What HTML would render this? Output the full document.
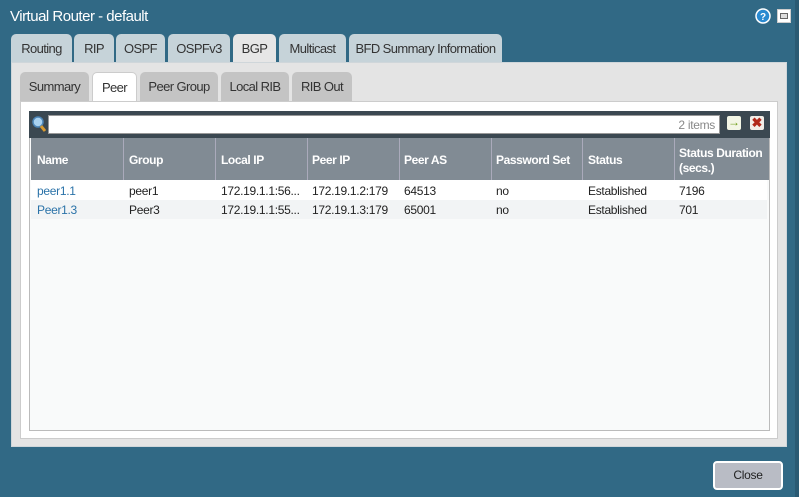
<!DOCTYPE html>
<html><head><style>
*{margin:0;padding:0;box-sizing:border-box}
body{width:799px;height:497px;background:#316985;font-family:"Liberation Sans",sans-serif;position:relative;overflow:hidden;font-size:12px}
.abs{position:absolute}
.title{left:10px;top:8px;color:#fff;font-size:15px;letter-spacing:-0.5px}
.tab{position:absolute;top:34px;height:28px;background:#c6d3d9;border-radius:5px 5px 0 0;color:#333;font-size:13px;text-align:center;line-height:29px;letter-spacing:-0.6px}
.tab.act{background:#e6e6e6}
.outer{left:11px;top:62px;width:776px;height:385px;background:#e4e4e4;border:1px solid #cfd6da}
.stab{position:absolute;top:72px;height:29px;background:#c4c4c4;border-radius:5px 5px 0 0;color:#333;font-size:13px;text-align:center;line-height:30px;letter-spacing:-0.6px}
.stab.act{background:#fff;border:1px solid #ccc;border-bottom:none}
.inner{left:20px;top:101px;width:758px;height:338px;background:#fff;border:1px solid #ccc}
.grid{left:29px;top:111px;width:741px;height:320px;background:#f9fafa;border:1px solid #bbb}
.tool{left:29px;top:111px;width:741px;height:27px;background:#3b4851}
.search{left:48px;top:115px;width:672px;height:19px;background:#fff;border:1px solid #999;text-align:right;color:#888;font-size:12px;line-height:18px;padding-right:4px;letter-spacing:-0.3px}
.hdr{left:31px;top:138px;width:738px;height:42px;background:#818b94}
.col{position:absolute;color:#fff;font-weight:bold;font-size:12px;letter-spacing:-0.4px}
.cell{position:absolute;color:#222;font-size:12px;letter-spacing:-0.3px}
.vl{position:absolute;width:1px;background:#c8c8c8}
.close{left:713px;top:461px;width:70px;height:29px;background:#b9bcc5;border:2px solid #fff;border-radius:4px;text-align:center;line-height:25px;font-size:12px;color:#222;letter-spacing:-0.3px}
</style></head><body>
<div class="abs title">Virtual Router - default</div>
<svg class="abs" style="left:755px;top:8px" width="16" height="16"><circle cx="8" cy="8" r="7" fill="#2a8ad0" stroke="#fff" stroke-width="1.5"/><text x="8" y="12" font-size="10" font-weight="bold" fill="#fff" text-anchor="middle" font-family="Liberation Sans">?</text></svg>
<div class="abs" style="left:777px;top:9px;width:14px;height:14px;background:#fff;border:1px solid #ccc"><div style="margin:3px 2px;height:6px;border:1px solid #666;background:#ddd"></div></div>
<div class="abs" style="left:795px;top:0;width:4px;height:497px;background:#2a5a73"></div>

<div class="tab" style="left:11px;width:61px">Routing</div>
<div class="tab" style="left:74px;width:40px">RIP</div>
<div class="tab" style="left:116px;width:49px">OSPF</div>
<div class="tab" style="left:168px;width:62px">OSPFv3</div>
<div class="tab act" style="left:233px;width:43px">BGP</div>
<div class="tab" style="left:279px;width:67px">Multicast</div>
<div class="tab" style="left:349px;width:153px">BFD Summary Information</div>

<div class="abs outer"></div>
<div class="stab" style="left:20px;width:69px">Summary</div>
<div class="stab act" style="left:92px;width:45px">Peer</div>
<div class="stab" style="left:140px;width:78px">Peer Group</div>
<div class="stab" style="left:221px;width:68px">Local RIB</div>
<div class="stab" style="left:292px;width:60px">RIB Out</div>
<div class="abs inner"></div>
<div class="abs grid"></div>
<div class="abs tool"></div>
<svg class="abs" style="left:31px;top:115px" width="16" height="18"><circle cx="7" cy="7" r="5" fill="#a9d2f0" stroke="#4d86b8" stroke-width="1.5"/><line x1="10" y1="11" x2="14" y2="16" stroke="#d89a30" stroke-width="3"/></svg>
<div class="abs search">2 items</div>
<div class="abs" style="left:727px;top:116px;width:14px;height:14px;background:#f3f6e6;border-radius:2px;color:#6a9a10;font-size:12px;line-height:13px;text-align:center;font-weight:bold">→</div>
<div class="abs" style="left:750px;top:116px;width:14px;height:14px;background:#f3eee8;border-radius:2px;color:#b2281a;font-size:13px;line-height:14px;text-align:center;font-weight:bold">✖</div>

<div class="abs hdr"></div>
<div class="vl" style="left:123px;top:138px;height:81px;background:#aab"></div>
<div class="vl" style="left:215px;top:138px;height:81px;background:#aab"></div>
<div class="vl" style="left:307px;top:138px;height:81px;background:#aab"></div>
<div class="vl" style="left:399px;top:138px;height:81px;background:#aab"></div>
<div class="vl" style="left:491px;top:138px;height:81px;background:#aab"></div>
<div class="vl" style="left:582px;top:138px;height:81px;background:#aab"></div>
<div class="vl" style="left:674px;top:138px;height:81px;background:#aab"></div>
<div class="vl" style="left:766px;top:180px;height:39px"></div>
<div class="abs" style="left:31px;top:180px;width:736px;height:20px;background:#fff"></div>
<div class="abs" style="left:31px;top:200px;width:736px;height:19px;background:#f2f4f5"></div>

<div class="col" style="left:37px;top:153px">Name</div>
<div class="col" style="left:129px;top:153px">Group</div>
<div class="col" style="left:221px;top:153px">Local IP</div>
<div class="col" style="left:312px;top:153px">Peer IP</div>
<div class="col" style="left:404px;top:153px">Peer AS</div>
<div class="col" style="left:496px;top:153px">Password Set</div>
<div class="col" style="left:588px;top:153px">Status</div>
<div class="col" style="left:679px;top:146px;line-height:15px">Status Duration<br>(secs.)</div>

<div class="cell" style="left:37px;top:184px;color:#2a72a8">peer1.1</div>
<div class="cell" style="left:129px;top:184px">peer1</div>
<div class="cell" style="left:221px;top:184px">172.19.1.1:56...</div>
<div class="cell" style="left:312px;top:184px">172.19.1.2:179</div>
<div class="cell" style="left:404px;top:184px">64513</div>
<div class="cell" style="left:496px;top:184px">no</div>
<div class="cell" style="left:588px;top:184px">Established</div>
<div class="cell" style="left:679px;top:184px">7196</div>

<div class="cell" style="left:37px;top:203px;color:#2a72a8">Peer1.3</div>
<div class="cell" style="left:129px;top:203px">Peer3</div>
<div class="cell" style="left:221px;top:203px">172.19.1.1:55...</div>
<div class="cell" style="left:312px;top:203px">172.19.1.3:179</div>
<div class="cell" style="left:404px;top:203px">65001</div>
<div class="cell" style="left:496px;top:203px">no</div>
<div class="cell" style="left:588px;top:203px">Established</div>
<div class="cell" style="left:679px;top:203px">701</div>

<div class="abs close">Close</div>
</body></html>
